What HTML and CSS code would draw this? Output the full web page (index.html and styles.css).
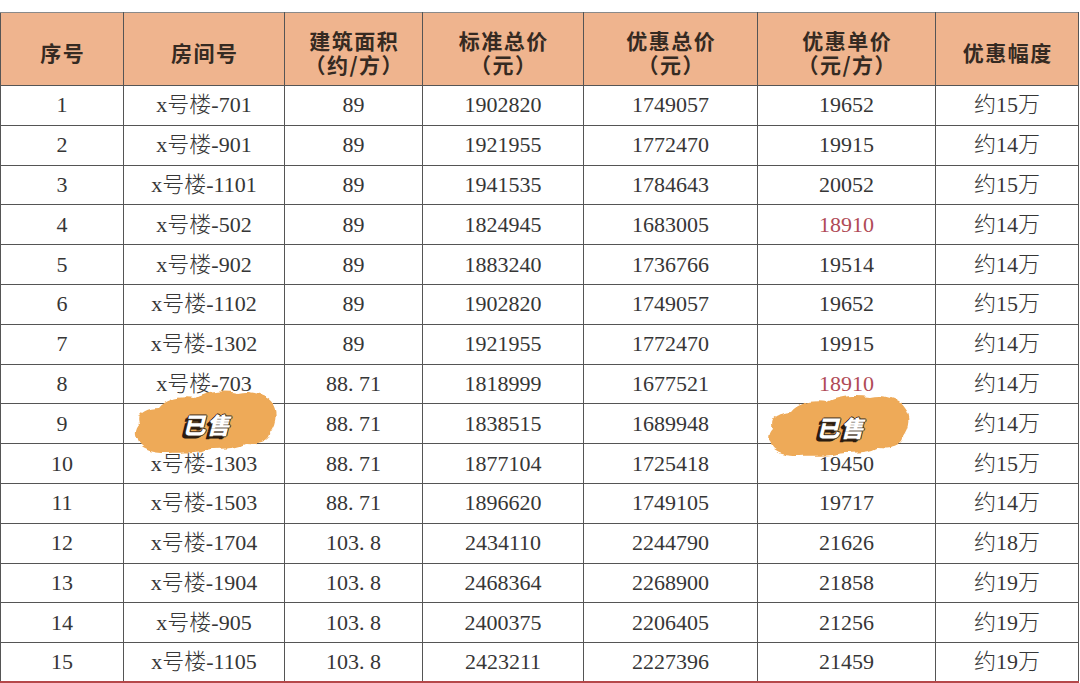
FILE: index.html
```html
<!DOCTYPE html>
<html lang="zh-CN">
<head>
<meta charset="utf-8">
<title>房源价格表</title>
<link rel="stylesheet" href="styles.css">
</head>
<body>
<svg class="defs" width="0" height="0" aria-hidden="true">
  <defs>
    <filter id="brush" x="-10%" y="-10%" width="120%" height="120%">
      <feTurbulence type="fractalNoise" baseFrequency="0.08" numOctaves="2" seed="4" result="noise"/>
      <feDisplacementMap in="SourceGraphic" in2="noise" scale="6" xChannelSelector="R" yChannelSelector="G"/>
    </filter>
  </defs>
</svg>
<table class="price-table">
  <colgroup>
    <col class="c1"><col class="c2"><col class="c3"><col class="c4"><col class="c5"><col class="c6"><col class="c7">
  </colgroup>
  <thead>
    <tr>
      <th>序号</th>
      <th>房间号</th>
      <th>建筑面积<br>（约/方）</th>
      <th>标准总价<br>（元）</th>
      <th>优惠总价<br>（元）</th>
      <th>优惠单价<br>（元/方）</th>
      <th>优惠幅度</th>
    </tr>
  </thead>
  <tbody>
    <tr><td>1</td><td>x号楼-701</td><td>89</td><td>1902820</td><td>1749057</td><td>19652</td><td>约15万</td></tr>
    <tr><td>2</td><td>x号楼-901</td><td>89</td><td>1921955</td><td>1772470</td><td>19915</td><td>约14万</td></tr>
    <tr><td>3</td><td>x号楼-1101</td><td>89</td><td>1941535</td><td>1784643</td><td>20052</td><td>约15万</td></tr>
    <tr><td>4</td><td>x号楼-502</td><td>89</td><td>1824945</td><td>1683005</td><td class="red">18910</td><td>约14万</td></tr>
    <tr><td>5</td><td>x号楼-902</td><td>89</td><td>1883240</td><td>1736766</td><td>19514</td><td>约14万</td></tr>
    <tr><td>6</td><td>x号楼-1102</td><td>89</td><td>1902820</td><td>1749057</td><td>19652</td><td>约15万</td></tr>
    <tr><td>7</td><td>x号楼-1302</td><td>89</td><td>1921955</td><td>1772470</td><td>19915</td><td>约14万</td></tr>
    <tr><td>8</td><td>x号楼-703</td><td>88<span class="dot">.</span>71</td><td>1818999</td><td>1677521</td><td class="red">18910</td><td>约14万</td></tr>
    <tr>
      <td>9</td>
      <td class="sold-cell"><span class="sold s1"><svg class="blob" viewBox="0 0 146 66" aria-hidden="true"><path class="blob-shape" d="M6,34 C2,24 14,18 26,18 C34,8 50,6 62,8 C74,2 90,0 104,3 C118,0 134,4 140,14 C146,22 144,34 138,42 C140,52 126,56 112,54 C100,60 84,58 72,60 C58,64 44,62 34,63 C18,64 4,58 4,50 C0,44 2,38 6,34 Z"/></svg><span class="sold-text">已售</span></span></td>
      <td>88<span class="dot">.</span>71</td><td>1838515</td><td>1689948</td>
      <td class="sold-cell"><span class="sold s2"><svg class="blob" viewBox="0 0 146 66" aria-hidden="true"><path class="blob-shape" d="M5,36 C1,26 12,20 24,19 C32,9 48,7 60,9 C72,3 88,2 102,4 C116,1 132,5 138,15 C145,23 143,35 137,43 C139,53 124,57 110,55 C98,61 82,59 70,61 C56,64 42,62 32,63 C16,64 3,58 3,51 C0,45 1,40 5,36 Z"/></svg><span class="sold-text">已售</span></span></td>
      <td>约14万</td>
    </tr>
    <tr><td>10</td><td>x号楼-1303</td><td>88<span class="dot">.</span>71</td><td>1877104</td><td>1725418</td><td>19450</td><td>约15万</td></tr>
    <tr><td>11</td><td>x号楼-1503</td><td>88<span class="dot">.</span>71</td><td>1896620</td><td>1749105</td><td>19717</td><td>约14万</td></tr>
    <tr><td>12</td><td>x号楼-1704</td><td>103<span class="dot">.</span>8</td><td>2434110</td><td>2244790</td><td>21626</td><td>约18万</td></tr>
    <tr><td>13</td><td>x号楼-1904</td><td>103<span class="dot">.</span>8</td><td>2468364</td><td>2268900</td><td>21858</td><td>约19万</td></tr>
    <tr><td>14</td><td>x号楼-905</td><td>103<span class="dot">.</span>8</td><td>2400375</td><td>2206405</td><td>21256</td><td>约19万</td></tr>
    <tr class="last"><td>15</td><td>x号楼-1105</td><td>103<span class="dot">.</span>8</td><td>2423211</td><td>2227396</td><td>21459</td><td>约19万</td></tr>
  </tbody>
</table>
</body>
</html>
```
FILE: styles.css
```css
html, body {
  margin: 0;
  padding: 0;
  background: #ffffff;
}

body {
  padding-top: 12px;
  overflow: hidden;
}

.defs {
  position: absolute;
  width: 0;
  height: 0;
}

.price-table {
  border-collapse: collapse;
  table-layout: fixed;
  width: 1078px;
  font-family: "Liberation Serif", "Noto Sans CJK SC", serif;
  color: #363636;
}

.c1 { width: 123px; }
.c2 { width: 161px; }
.c3 { width: 138px; }
.c4 { width: 161px; }
.c5 { width: 174px; }
.c6 { width: 178px; }
.c7 { width: 143px; }

.price-table th,
.price-table td {
  border: 1.5px solid #555555;
  text-align: center;
  padding: 0;
}

.price-table thead tr {
  height: 73px;
}

.price-table th {
  background: #efb48e;
  font-family: "Noto Sans CJK SC", sans-serif;
  font-weight: 700;
  font-size: 21px;
  line-height: 24px;
  letter-spacing: 1.5px;
  color: #352a22;
  padding-top: 6px;
  padding-left: 1.5px;
  border-top-color: #8a8a8a;
}

.price-table tbody tr {
  height: 39.8px;
}

.price-table td {
  font-size: 22px;
  line-height: 24px;
  font-weight: 300;
}

.dot {
  display: inline-block;
  width: 11px;
  text-align: left;
}

.red {
  color: #b04a56;
}

.price-table tr.last td {
  border-bottom: 2px solid #b5484a;
}

.sold-cell {
  position: relative;
}

.sold {
  position: absolute;
  width: 146px;
  height: 66px;
  display: flex;
  align-items: center;
  justify-content: center;
}

.s1 {
  left: 9px;
  top: -14px;
}

.s2 {
  left: 9px;
  top: -11px;
}

.blob {
  position: absolute;
  left: 0;
  top: 0;
  width: 146px;
  height: 66px;
  overflow: visible;
}

.blob-shape {
  fill: #eeaa58;
  filter: url(#brush);
}

.sold-text {
  position: relative;
  top: 1px;
  left: 3px;
  font-family: "Noto Sans CJK SC", sans-serif;
  font-weight: 900;
  font-size: 23px;
  line-height: 26px;
  color: #ffffff;
  transform: skewX(-14deg);
  letter-spacing: 1px;
  text-shadow:
    -1px 0 #3a2a1a,
    1px 0 #3a2a1a,
    0 -1px #3a2a1a,
    0 1px #3a2a1a,
    -2px 2px #2a1c10,
    -3px 3px #2a1c10;
}
```
